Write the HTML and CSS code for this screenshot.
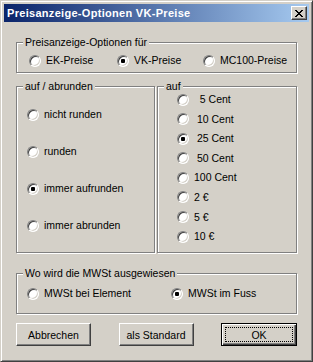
FILE: index.html
```html
<!DOCTYPE html>
<html lang="de">
<head>
<meta charset="UTF-8">
<title>Preisanzeige-Optionen VK-Preise</title>
<link rel="stylesheet" href="styles.css">
</head>
<body>

<div class="win">
  <div class="titlebar">
    <span class="title">Preisanzeige-Optionen VK-Preise</span>
    <span class="close">
      <svg width="8" height="7" viewBox="0 0 8 7" shape-rendering="crispEdges">
        <path d="M0 0h2v1h-2z M6 0h2v1h-2z M1 1h2v1h-2z M5 1h2v1h-2z M2 2h4v1h-4z M3 3h2v1h-2z M2 4h4v1h-4z M1 5h2v1h-2z M5 5h2v1h-2z M0 6h2v1h-2z M6 6h2v1h-2z" fill="#000"/>
      </svg>
    </span>
  </div>

  <div class="content">
    <!-- Preisart -->
    <div class="grp grp-art">
      <span class="legend">Preisanzeige-Optionen für</span>
      <div class="row">
        <label class="opt w88"><span class="radio"></span>EK-Preise</label>
        <label class="opt w86"><span class="radio on"></span>VK-Preise</label>
        <label class="opt"><span class="radio"></span>MC100-Preise</label>
      </div>
    </div>

    <div class="cols">
      <div class="grp grp-runden">
        <span class="legend">auf / abrunden</span>
        <label class="opt"><span class="radio"></span>nicht runden</label>
        <label class="opt"><span class="radio"></span>runden</label>
        <label class="opt"><span class="radio on"></span>immer aufrunden</label>
        <label class="opt"><span class="radio"></span>immer abrunden</label>
      </div>
      <div class="grp grp-auf">
        <span class="legend">auf</span>
        <label class="opt"><span class="radio"></span>&nbsp;&nbsp;5 Cent</label>
        <label class="opt"><span class="radio"></span>&nbsp;10 Cent</label>
        <label class="opt"><span class="radio on"></span>&nbsp;25 Cent</label>
        <label class="opt"><span class="radio"></span>&nbsp;50 Cent</label>
        <label class="opt"><span class="radio"></span>100 Cent</label>
        <label class="opt"><span class="radio"></span>2 €</label>
        <label class="opt"><span class="radio"></span>5 €</label>
        <label class="opt"><span class="radio"></span>10 €</label>
      </div>
    </div>

    <!-- MWSt -->
    <div class="grp grp-mwst">
      <span class="legend">Wo wird die MWSt ausgewiesen</span>
      <div class="row">
        <label class="opt w144"><span class="radio"></span>MWSt bei Element</label>
        <label class="opt"><span class="radio on"></span>MWSt im Fuss</label>
      </div>
    </div>

    <div class="buttons">
      <button class="btn">Abbrechen</button>
      <button class="btn">als Standard</button>
      <button class="btn def">OK</button>
    </div>
  </div>
</div>

</body>
</html>
```

FILE: styles.css
```css
html, body { margin:0; padding:0; background:#d4d0c8; }
body { font-family:"Liberation Sans", Arial, sans-serif; font-size:10.5px; color:#000; }

.win {
  width:313px; height:362px; box-sizing:border-box;
  background:#d4d0c8; padding:3px;
  border:1px solid; border-color:#d4d0c8 #404040 #404040 #d4d0c8;
  box-shadow: inset 1px 1px #fff, inset -1px -1px #808080;
}

/* Titelleiste */
.titlebar {
  height:18px; display:flex; align-items:center; justify-content:space-between;
  padding-left:3px; padding-right:2px;
  background:linear-gradient(to right, #0a246a, #a6caf0);
}
.title { color:#fff; font-weight:700; font-size:11px; letter-spacing:.3px; line-height:13px; }
.close {
  width:16px; height:14px; box-sizing:border-box;
  display:flex; align-items:center; justify-content:center;
  background:#d4d0c8;
  border:1px solid; border-color:#fff #404040 #404040 #fff;
  box-shadow: inset -1px -1px #808080;
}
.close svg { display:block; margin-left:-1px; }

.content { padding:0 12px; }

/* Gruppenrahmen */
.grp {
  position:relative; box-sizing:border-box;
  border:1px solid #808080;
  box-shadow: inset 1px 1px #fff, 1px 1px #fff;
}
.legend {
  position:absolute; top:-7px; left:6px;
  padding:0 2px; background:#d4d0c8; line-height:13px; white-space:nowrap;
}

.grp-art { margin-top:20px; height:31px; padding:11px 0 0 12px; }
.cols { display:flex; gap:2px; margin-top:13px; }
.grp-runden {
  width:139px; height:167px; padding:21px 0 0 10px;
  display:flex; flex-direction:column; gap:24px;
}
.grp-auf {
  width:140px; height:167px; padding:6px 0 0 19px;
  display:flex; flex-direction:column; gap:6.6px;
}
.grp-mwst { margin-top:20px; height:41px; padding:13px 0 0 10px; }

.row { display:flex; }
.w88 { width:88px; }
.w86 { width:86px; }
.w144 { width:144px; }

.opt { display:flex; align-items:center; height:13px; line-height:13px; white-space:nowrap; }

/* Optionsfelder */
.radio {
  position:relative; flex:none;
  width:12px; height:12px; box-sizing:border-box; margin-right:5px;
  border-radius:50%; background:#fff;
  border:1px solid; border-color:#808080 #fff #fff #808080;
  box-shadow: inset 1px 1px #404040, inset -1px -1px #d4d0c8;
}
.radio.on::after {
  content:""; position:absolute; left:3px; top:3px;
  width:4px; height:4px; border-radius:1px; background:#000;
}

/* Schaltflächen */
.buttons { display:flex; justify-content:space-between; margin-top:9px; }
.btn {
  width:75px; height:23px; padding:0; box-sizing:border-box;
  font-family:inherit; font-size:10.5px; color:#000;
  background:#d4d0c8;
  border:1px solid; border-color:#fff #404040 #404040 #fff;
  box-shadow: inset -1px -1px #808080;
}
.btn.def {
  width:76px;
  border:1px solid #000;
  box-shadow: inset 1px 1px #fff, inset -1px -1px #404040, inset -2px -2px #808080;
  outline:1px dotted #000; outline-offset:-5px;
}
```
